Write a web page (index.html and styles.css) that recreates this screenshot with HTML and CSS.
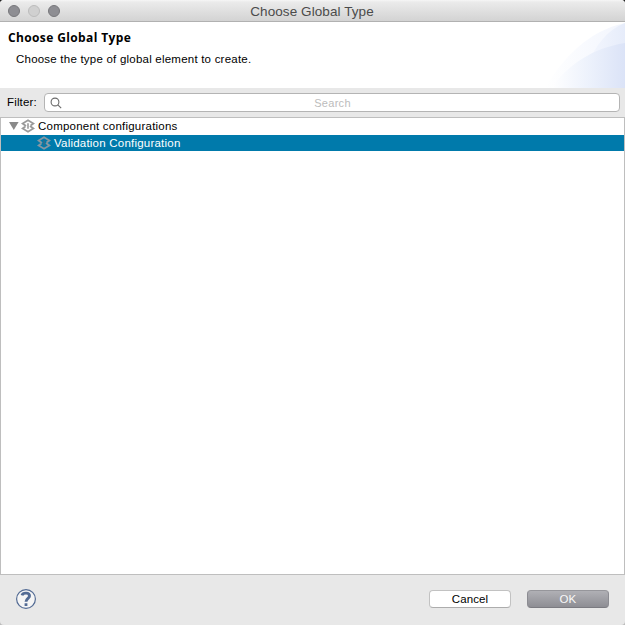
FILE: index.html
```
<!DOCTYPE html>
<html lang="en">
<head>
<meta charset="utf-8">
<title>Choose Global Type</title>
<link rel="stylesheet" href="styles.css">
</head>
<body>
<div class="backdrop">
<main class="window">
  <div class="titlebar">
    <div class="lights"><i class="light"></i><i class="light light-off"></i><i class="light"></i></div>
    <div class="title"><span>Choose Global Type</span></div>
  </div>
  <header class="header">
    <div class="intro">
      <h1><span>Choose Global Type</span></h1>
      <p><span>Choose the type of global element to create.</span></p>
    </div>
    <svg class="wave" width="80" height="66" viewBox="0 0 80 66">
      <defs>
        <linearGradient id="a"><stop offset="0" stop-color="#fff"/><stop offset=".6" stop-color="#f7f9fe"/><stop offset="1" stop-color="#f2f5fd"/></linearGradient>
        <linearGradient id="b"><stop offset="0" stop-color="#f4f7fe"/><stop offset="1" stop-color="#e6ecfa"/></linearGradient>
        <linearGradient id="c"><stop offset="0" stop-color="#fff"/><stop offset=".5" stop-color="#edf2fc"/><stop offset="1" stop-color="#dbe3f7"/></linearGradient>
      </defs>
      <path d="M0 66C18 36 43 9 80 1V66Z" fill="url(#a)"/>
      <path d="M43 42C50 24 62 8 80 1V42Z" fill="url(#b)"/>
      <path d="M6 66C24 42 48 26 80 21V66Z" fill="url(#c)"/>
    </svg>
  </header>
  <div class="filter">
    <label for="search"><span>Filter:</span></label>
    <div class="search">
      <svg width="12" height="12" viewBox="0 0 12 12" fill="none" stroke="#6b6b6b" stroke-width="1.1"><circle cx="5" cy="5" r="3.9"/><path d="M7.8 7.8 11.2 11.2"/></svg>
      <input id="search" placeholder="Search">
    </div>
  </div>
  <section class="tree">
    <div class="row">
      <svg class="arrow" width="10" height="8" viewBox="0 0 10 8"><path d="M0 0H9.6L4.8 8Z" fill="#8a8a8a"/></svg>
      <svg class="node" width="14" height="14" viewBox="0 0 14 14" fill="none" stroke="#9a9a9a" stroke-width="1.8"><path d="M5 7 1.6 4.5 7 1.2 12.4 4.5 9.6 6.4M9 7 12.4 9.5 7 12.8 1.6 9.5 4.4 7.6"/><path d="M7 4.2V9.8" stroke-width="1.6"/></svg>
      <span class="parent">Component configurations</span>
    </div>
    <div class="row child selected">
      <svg class="node" width="14" height="14" viewBox="0 0 14 14" fill="none" stroke="#8797a2" stroke-width="1.8"><path d="M5 7 1.6 4.5 7 1.2 12.4 4.5 9.6 6.4M9 7 12.4 9.5 7 12.8 1.6 9.5 4.4 7.6"/><path d="M7 4.2V9.8" stroke="#356c88" stroke-width="1.6"/></svg>
      <span class="leaf">Validation Configuration</span>
    </div>
  </section>
  <footer class="footer">
    <button class="help" aria-label="Help"><svg width="20" height="20" viewBox="0 0 20 20" fill="none" stroke="#536b94"><circle cx="10" cy="10" r="9.4" fill="#f5f5f5" stroke-width="1.2"/><path d="M6 6.4C7 3.3 13.5 3.3 13.5 6.9 13.5 9.3 10 9.4 10 12.8" stroke-width="2.9"/><path d="M8.6 15.6H11.4" stroke-width="2.6"/></svg></button>
    <div class="actions"><button class="btn"><span class="t-cancel">Cancel</span></button><button class="btn ok"><span class="t-ok">OK</span></button></div>
  </footer>
</main>
</div>
</body>
</html>
```
FILE: styles.css
```
* { box-sizing: border-box; }
body { margin: 0; font: 11.5px/16px "Liberation Sans", sans-serif; letter-spacing: .22px; color: #000; }
.backdrop { background: linear-gradient(#222 50%, #bbb 50%); }
.window { width: 625px; height: 625px; display: flex; flex-direction: column; background: #e8e8e8; border-radius: 4px; overflow: hidden; }
.titlebar { height: 22px; display: grid; grid-template-columns: 62px 1fr 62px; align-items: center; background: linear-gradient(#f6f6f6 0, #ebebeb 2px, #d3d3d3); border-bottom: 1px solid #b1b1b1; }
.lights { display: flex; gap: 8px; padding-left: 8px; }
.light { width: 12px; height: 12px; border-radius: 50%; background: #8e8e93; border: 1px solid #77777b; }
.light-off { background: #d0d0d0; border-color: #bcbcbc; }
.title { text-align: center; font-size: 13.5px; color: #4b4b4b; letter-spacing: .08px; padding: 2px 1px 0 0; }
.header { height: 66px; display: flex; justify-content: space-between; background: #fff; }
.intro { padding: 8px 0 0 8px; }
h1 { margin: 0; font: bold 12px/16px "Open Sans", sans-serif; letter-spacing: .37px; }
p { margin: 5px 0 0 8px; }
.wave { display: block; }
.filter { height: 29px; display: flex; align-items: center; padding: 0 5px 0 7px; }
label { width: 37px; margin-top: -1px; letter-spacing: .15px; }
.search { flex: 1; height: 19px; display: flex; align-items: center; background: #fff; border: 1px solid #b4b4b4; border-radius: 4px; padding: 0 5px; }
input { flex: 1; min-width: 0; border: 0; padding: 1px 11px 0 0; outline: 0; background: transparent; text-align: center; font: 11px/15px "Liberation Sans", sans-serif; letter-spacing: .3px; }
input::placeholder { color: #bcbcbc; opacity: 1; }
.tree { height: 458px; background: #fff; border: 1px solid #bebebe; }
.row { height: 16px; display: flex; align-items: center; padding-left: 8px; }
.arrow { margin-right: 2px; }
.node { margin-right: 3px; }
.child { margin-top: 1px; padding-left: 36px; }
.selected { background: #007aab; color: #fff; }
.footer { flex: 1; display: flex; justify-content: space-between; align-items: center; padding: 0 16px 2px 16px; }
.help { border: 0; padding: 0; background: none; }
.help svg { display: block; }
.actions { display: flex; gap: 16px; }
.btn { width: 82px; height: 18px; padding: 0; border: 1px solid #c2c2c2; border-bottom-color: #adadad; border-radius: 4px; background: #fff; color: #000; font: 11.5px/16px "Liberation Sans", sans-serif; letter-spacing: .1px; }
.ok { color: #f8f8f8; border-color: #96969b #8c8c92 #7b7b81; background: linear-gradient(#b0b0b5, #8e8e94); }
```
